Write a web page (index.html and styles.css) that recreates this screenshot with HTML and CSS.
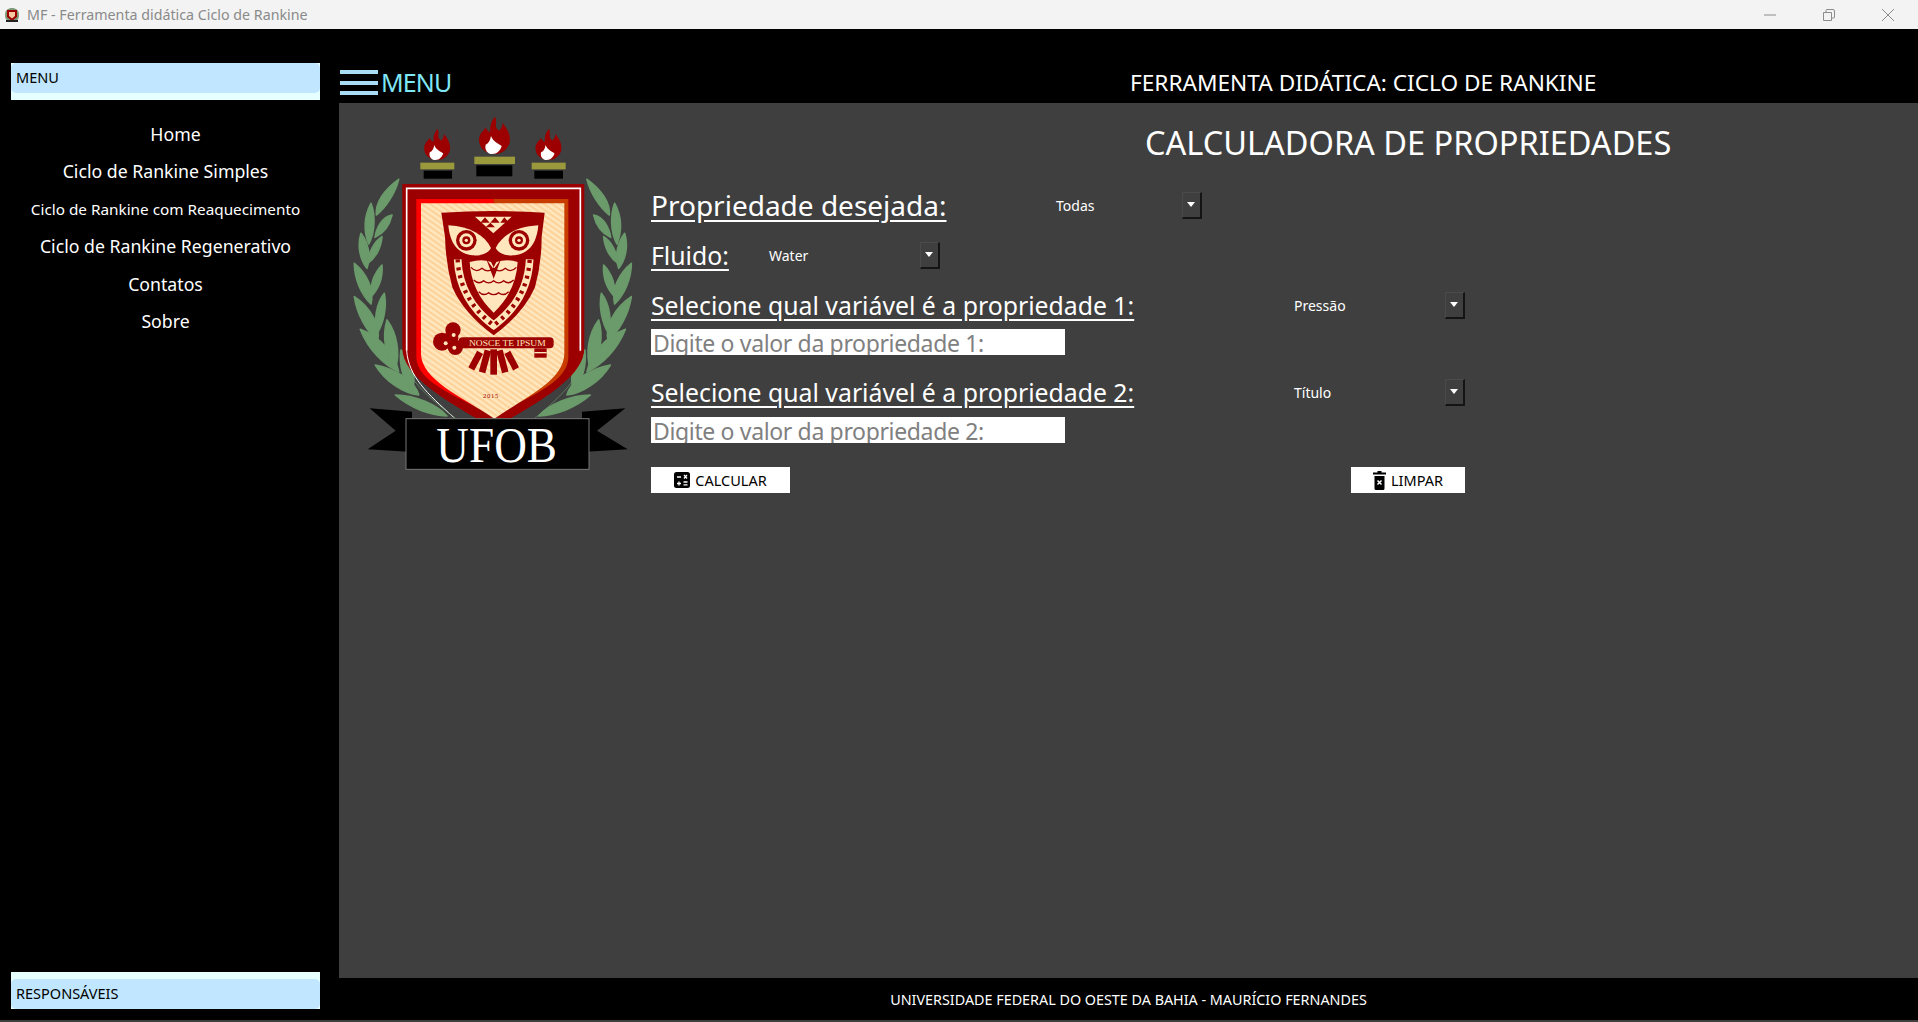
FILE: index.html
```html
<!DOCTYPE html>
<html lang="pt">
<head>
<meta charset="utf-8">
<title>MF - Ferramenta didática Ciclo de Rankine</title>
<link rel="stylesheet" href="styles.css">
</head>
<body>
<svg class="defs" width="0" height="0" aria-hidden="true">
  <defs>
    <pattern id="stripes" width="14" height="14" patternUnits="userSpaceOnUse" patternTransform="rotate(35)">
      <rect width="14" height="14" fill="#ffe6bd"/>
      <rect width="14" height="6" fill="#fdd29a"/>
    </pattern>
    <g id="torch">
      <path d="M465 50C472 72 458 82 478 92C484 82 488 76 486 68C500 84 512 104 508 128C502 150 482 162 462 162C438 162 416 146 416 120C416 100 430 94 436 82C440 92 444 96 450 96C448 78 452 62 465 50Z" fill="#9c0000"/>
      <path d="M452 108C458 124 472 130 484 138C480 152 470 162 456 162C442 162 432 150 436 134C446 130 450 120 452 108Z" fill="#fff"/>
    </g>
    <g id="branch" fill="#6b9a6b" stroke="#6b9a6b" stroke-width="5" stroke-linejoin="round">
      <path d="M175 238C130 270 105 310 108 345C135 325 165 280 175 238Z"/>
      <path d="M92 310C70 350 70 395 85 432C105 395 105 345 92 310Z"/>
      <path d="M155 345C125 350 108 385 104 412C130 400 148 375 155 345Z"/>
      <path d="M62 400C50 440 60 480 80 505C92 470 85 430 62 400Z"/>
      <path d="M125 410C100 425 85 460 82 490C105 475 122 445 125 410Z"/>
      <path d="M42 490C42 540 65 585 92 612C102 570 80 520 42 490Z"/>
      <path d="M125 495C100 520 88 560 90 592C112 570 128 535 125 495Z"/>
      <path d="M42 590C50 645 80 695 112 722C122 680 90 620 42 590Z"/>
      <path d="M132 580C108 610 100 660 110 700C130 670 140 620 132 580Z"/>
      <path d="M60 688C85 750 130 795 175 815C165 765 120 710 60 688Z"/>
      <path d="M140 660C125 710 135 770 165 805C180 760 170 700 140 660Z"/>
      <path d="M105 795C135 845 190 880 235 885C225 845 165 805 105 795Z"/>
      <path d="M182 750C175 795 190 845 215 872C230 830 215 785 182 750Z"/>
      <path d="M165 885C210 925 270 945 320 948C290 915 225 885 165 885Z"/>
    </g>
  </defs>
</svg>
<div class="window">
  <div class="titlebar">
    <svg class="app-icon" viewBox="0 0 18 16" width="18" height="16">
      <path d="M2 8C2 3 5 1 9 1S16 3 16 8 13 15 9 15 2 13 2 8Z" fill="#7e9a7a"/>
      <path d="M4 3H14V10L9 14 4 10Z" fill="#9c0000"/>
      <path d="M6 5H12V9L9 11.500 6 9Z" fill="#f6c8a0"/>
      <rect x="3" y="13" width="12" height="2" fill="#222"/>
    </svg>
    <span class="app-title">MF - Ferramenta didática Ciclo de Rankine</span>
    <div class="win-controls">
      <svg width="14" height="14" viewBox="0 0 14 14"><path d="M1 7H13" stroke="#8c8c8c" stroke-width="1" fill="none"/></svg>
      <svg width="14" height="14" viewBox="0 0 14 14"><path d="M1.500 4.500H9.500V12.500H1.500ZM4 4.500V2.500Q4 1.500 5 1.500H11Q12.500 1.500 12.500 3V9Q12.500 10 11.500 10H9.500" stroke="#8c8c8c" stroke-width="1" fill="none"/></svg>
      <svg width="14" height="14" viewBox="0 0 14 14"><path d="M1 1L13 13M13 1L1 13" stroke="#8c8c8c" stroke-width="1" fill="none"/></svg>
    </div>
  </div>
  <div class="app">
    <aside class="sidebar">
      <div class="side-head side-head-top"><span class="side-label">MENU</span></div>
      <nav class="side-nav">
        <a class="nav-item nav-home">Home</a>
        <a class="nav-item">Ciclo de Rankine Simples</a>
        <a class="nav-item nav-small">Ciclo de Rankine com Reaquecimento</a>
        <a class="nav-item">Ciclo de Rankine Regenerativo</a>
        <a class="nav-item">Contatos</a>
        <a class="nav-item">Sobre</a>
      </nav>
      <div class="side-head side-head-bottom"><span class="side-label">RESPONSÁVEIS</span></div>
    </aside>
    <div class="content">
      <header class="topbar">
        <div class="burger"><i></i><i></i><i></i></div>
        <span class="topbar-menu">MENU</span>
        <span class="topbar-title">FERRAMENTA DIDÁTICA: CICLO DE RANKINE</span>
      </header>
      <main class="panel">
        <svg class="crest" viewBox="0 51 880 1080" width="294" height="360">
          <use href="#branch"/>
          <use href="#branch" transform="translate(915 0) scale(-1 1)"/>
          <use href="#torch"/>
          <rect x="402" y="170" width="122" height="22" fill="#9a9a3c"/>
          <rect x="408" y="196" width="108" height="33" fill="#000"/>
          <use href="#torch" transform="translate(-98 44) scale(.84)"/>
          <rect x="240" y="188" width="102" height="20" fill="#9a9a3c"/>
          <rect x="250" y="212" width="85" height="24" fill="#000"/>
          <use href="#torch" transform="translate(236 44) scale(.84)"/>
          <rect x="574" y="188" width="102" height="20" fill="#9a9a3c"/>
          <rect x="582" y="212" width="86" height="24" fill="#000"/>

          <path d="M186 252H732V745C732 830 600 905 460 985C320 905 186 830 186 745Z" fill="#9c0000"/>
          <path d="M199 752V265H720V752" fill="none" stroke="#fff" stroke-width="5"/>
          <path d="M199 752C205 830 260 880 340 952" fill="none" stroke="#fff" stroke-width="3"/>
          <path d="M184 750C190 830 260 890 350 958M734 750C728 830 660 890 580 958" fill="none" stroke="#6b9a6b" stroke-width="2"/>
          <path d="M228 297H460V950C360 890 228 850 228 770Z" fill="#f00"/>
          <path d="M460 297H684V770C684 850 560 890 460 950Z" fill="#c83c00"/>
          <path d="M242 310H672V760C672 840 560 890 462 956C364 890 242 840 242 760Z" fill="url(#stripes)"/>

          <g transform="translate(180 240)">
            <path d="M123 98Q280 88 433 98L424 170Q424 250 404 322Q370 400 280 466Q190 400 156 322Q136 250 134 170Z" fill="#9c0000"/>
            <path d="M144 136C210 140 252 165 272 204C262 224 235 228 215 226C165 220 148 180 144 136Z" fill="#ffe6bd"/>
            <path d="M414 136C348 140 306 165 286 204C296 224 323 228 343 226C393 220 410 180 414 136Z" fill="#ffe6bd"/>
            <circle cx="198" cy="181" r="31" fill="#9c0000"/>
            <circle cx="198" cy="181" r="21" fill="#ffe6bd"/>
            <circle cx="198" cy="181" r="12" fill="#9c0000"/>
            <circle cx="198" cy="181" r="5" fill="#ffe6bd"/>
            <circle cx="356" cy="181" r="31" fill="#9c0000"/>
            <circle cx="356" cy="181" r="21" fill="#ffe6bd"/>
            <circle cx="356" cy="181" r="12" fill="#9c0000"/>
            <circle cx="356" cy="181" r="5" fill="#ffe6bd"/>
            <path d="M224 110H334L279 160Z" fill="#ffe6bd"/>
            <path d="M240 128L254 112 268 128ZM270 128L284 112 298 128ZM300 128L312 112 326 128ZM256 142L270 128 284 142Z" fill="#9c0000"/>
            <path d="M172 238C176 330 225 395 280 436C335 395 384 330 388 238" fill="none" stroke="#ffe6bd" stroke-width="23"/>
            <path d="M172 238C176 330 225 395 280 436C335 395 384 330 388 238" fill="none" stroke="#9c0000" stroke-width="13" stroke-dasharray="9 15"/>
            <path d="M208 246Q245 236 272 246L280 262 288 246Q320 236 352 246Q347 335 280 398Q213 335 208 246Z" fill="#ffe6bd"/>
            <path d="M212 262Q228 280 245 265Q262 280 280 265Q298 280 315 265Q332 280 348 262M220 300Q235 315 250 302Q265 315 280 302Q295 315 310 302Q325 315 340 300M235 335Q250 350 265 338Q280 350 295 338Q310 350 325 335" fill="none" stroke="#9c0000" stroke-width="4"/>
            <path d="M258 238L280 296 302 238 280 268Z" fill="#9c0000"/>
          </g>

          <circle cx="338" cy="690" r="23" fill="#9c0000"/>
          <circle cx="305" cy="725" r="27" fill="#9c0000"/>
          <circle cx="345" cy="742" r="23" fill="#9c0000"/>
          <circle cx="332" cy="715" r="22" fill="#9c0000"/>
          <circle cx="340" cy="705" r="6" fill="#ffe6bd"/>
          <circle cx="316" cy="730" r="6" fill="#ffe6bd"/>
          <circle cx="342" cy="743" r="6" fill="#ffe6bd"/>
          <rect x="355" y="712" width="285" height="33" rx="12" fill="#9c0000"/>
          <rect x="582" y="745" width="37" height="28" fill="#9c0000"/>
          <rect x="582" y="756" width="37" height="4" fill="#ffe6bd"/>
          <text class="crest-motto" x="386" y="738" textLength="230" lengthAdjust="spacingAndGlyphs">NOSCE TE IPSUM</text>
          <g fill="#9c0000">
            <rect x="396" y="754" width="20" height="56" transform="rotate(28 406 782)"/>
            <rect x="424" y="750" width="20" height="68" transform="rotate(15 434 784)"/>
            <rect x="450" y="748" width="20" height="76"/>
            <rect x="476" y="750" width="20" height="68" transform="rotate(-15 486 784)"/>
            <rect x="504" y="754" width="20" height="56" transform="rotate(-28 514 782)"/>
          </g>
          <text class="crest-year" x="428" y="894">2015</text>

          <path d="M88 925L215 935V1056L82 1048 166 992Z" fill="#000"/>
          <path d="M855 925L725 935V1056L862 1048 770 992Z" fill="#000"/>
          <rect x="197" y="956" width="549" height="152" fill="#000" stroke="#777" stroke-width="3"/>
          <text class="crest-name" x="288" y="1085" textLength="362" lengthAdjust="spacingAndGlyphs">UFOB</text>
        </svg>

        <section class="form">
          <h1 class="form-title">CALCULADORA DE PROPRIEDADES</h1>
          <div class="row row-want">
            <span class="label label-large">Propriedade desejada:</span>
            <div class="combo"><span>Todas</span><b class="combo-btn"></b></div>
          </div>
          <div class="row row-fluid">
            <span class="label">Fluido:</span>
            <div class="combo combo-inset"><span>Water</span><b class="combo-btn"></b></div>
          </div>
          <div class="row row-prop">
            <span class="label">Selecione qual variável é a propriedade 1:</span>
            <div class="combo combo-inset"><span>Pressão</span><b class="combo-btn"></b></div>
          </div>
          <input class="value" placeholder="Digite o valor da propriedade 1:">
          <div class="row row-prop">
            <span class="label">Selecione qual variável é a propriedade 2:</span>
            <div class="combo combo-inset"><span>Título</span><b class="combo-btn"></b></div>
          </div>
          <input class="value" placeholder="Digite o valor da propriedade 2:">
          <div class="actions">
            <button class="btn btn-calc">
              <svg width="16" height="16" viewBox="0 0 16 16"><rect width="16" height="16" rx="2.500" fill="#000"/><path d="M3 5H7M10 3L13 6.500M13 3L10 6.500M3 11.500H7M5 9.500V13.500M9.500 10H13.500M9.500 12.800H13.500" stroke="#fff" stroke-width="1.300" fill="none"/></svg>
              CALCULAR
            </button>
            <button class="btn btn-clear">
              <svg width="13" height="19" viewBox="0 0 13 19"><path d="M4.500 0H8.500V1.500H13V3.500H0V1.500H4.500ZM1.500 5H11.500V17.500Q11.500 19 10 19H3Q1.500 19 1.500 17.500Z" fill="#000"/><path d="M4.500 9.500L8.500 13.500M8.500 9.500L4.500 13.500" stroke="#fff" stroke-width="1.500" fill="none"/></svg>
              LIMPAR
            </button>
          </div>
        </section>
      </main>
      <footer class="footer">UNIVERSIDADE FEDERAL DO OESTE DA BAHIA - MAURÍCIO FERNANDES</footer>
    </div>
  </div>
</div>
</body>
</html>
```

FILE: styles.css
```css
* { box-sizing: border-box; }
html, body { margin: 0; height: 100%; overflow: hidden; }
body { font-family: "Noto Sans", "Open Sans", sans-serif; background: #000; }
.defs { position: absolute; }
.window { height: 1022px; display: flex; flex-direction: column; border-bottom: 2px solid #3f3f3f; }

.titlebar { height: 29px; flex: none; background: #f3f3f3; display: flex; align-items: center; padding-left: 3px; }
.app-icon { flex: none; margin-right: 6px; }
.app-title { font-size: 14.250px; color: #8a8a8a; }
.win-controls { margin-left: auto; display: flex; gap: 45px; padding-right: 23px; }
.win-controls svg { display: block; }

.app { flex: 1; display: flex; min-height: 0; }

.sidebar { width: 339px; flex: none; display: flex; flex-direction: column; padding: 34px 19px 11px 11px; }
.side-head { height: 37px; background: #e6ffff; display: flex; flex: none; }
.side-head-top { align-items: flex-start; }
.side-head-bottom { margin-top: auto; align-items: flex-end; }
.side-label { display: block; width: 100%; height: 30px; line-height: 29px; background: #c0e7ff; color: #000; font-size: 14.500px; padding-left: 5px; border-radius: 5px; }
.side-nav { display: flex; flex-direction: column; align-items: center; padding-top: 15.500px; }
.nav-item { height: 37.500px; line-height: 37.500px; font-size: 17.700px; color: #fff; white-space: nowrap; }
.nav-small { font-size: 15.300px; line-height: 36px; }
.nav-home { padding-left: 20px; }

.content { flex: 1; min-width: 0; display: flex; flex-direction: column; }
.topbar { height: 74px; flex: none; display: flex; align-items: flex-end; padding-bottom: 6px; position: relative; }
.burger { width: 38px; height: 25px; margin: 0 3px 2px 1px; display: flex; flex-direction: column; justify-content: space-between; }
.burger i { display: block; height: 4px; background: #a8dcf5; }
.topbar-menu { font-size: 25px; line-height: 30px; letter-spacing: -.9px; color: #7fe6f5; }
.topbar-title { position: absolute; left: 791px; bottom: 5px; font-size: 22.650px; line-height: 30px; color: #fff; white-space: nowrap; }

.panel { flex: 1; min-height: 0; background: #3f3f3f; display: grid; grid-template-columns: 312px 1fr; align-items: start; }
.crest { display: block; margin: 14px 0 0 1px; }
.crest-motto { font: 24px "Liberation Serif", serif; fill: #ffe6bd; }
.crest-year { font: 20px "Liberation Serif", serif; fill: #9c0000; letter-spacing: 2px; }
.crest-name { font: 150px "Liberation Serif", serif; fill: #fff; }

.form { display: flex; flex-direction: column; width: 814px; align-items: stretch; }
.form-title { margin: 18px -420px 0 0; padding-left: 494px; height: 71px; font-size: 32.500px; line-height: 44px; font-weight: 400; color: #fff; white-space: nowrap; }
.row { height: 27px; display: grid; align-items: center; margin-bottom: 23px; }
.row-want { grid-template-columns: 399px 152px; }
.row-fluid { grid-template-columns: 111px 178px; }
.row-prop { grid-template-columns: 636px 178px; margin-bottom: 10px; }
.label { font-size: 24.800px; line-height: 27px; color: #fff; text-decoration: underline; text-underline-offset: 4px; white-space: nowrap; }
.label-large { font-size: 28px; }
.combo { height: 27px; display: flex; align-items: center; justify-content: space-between; color: #fff; font-size: 14px; padding-left: 6px; }
.combo-inset { padding-left: 7px; }
.combo-btn { width: 20px; height: 27px; background: #3f3f3f; border-top: 1px solid #4a4a4a; border-right: 2px solid #141414; border-bottom: 2px solid #141414; border-left: 1px solid #4a4a4a; position: relative; }
.combo-btn::after { content: ""; position: absolute; left: 4px; top: 9px; border: 4px solid transparent; border-top: 5px solid #fff; border-bottom: 0; }

.value { display: block; width: 414px; height: 26px; border: 0; background: #fff; margin: 0 0 24px; padding: 2px 0 0 2px; font: 23px/30px "Noto Sans", sans-serif; letter-spacing: -.35px; outline: 0; }
.value::placeholder { color: #808080; opacity: 1; }
.value + .row-prop { margin-bottom: 11px; }

.actions { display: flex; justify-content: space-between; }
.btn { height: 26px; border: 0; background: #fff; color: #000; font: 14.500px "Noto Sans", sans-serif; display: flex; align-items: center; justify-content: center; gap: 5px; padding: 0; }
.btn-calc { width: 139px; }
.btn-clear { width: 114px; }

.footer { height: 42px; flex: none; display: flex; align-items: center; justify-content: center; color: #fff; font-size: 14.350px; }
```
